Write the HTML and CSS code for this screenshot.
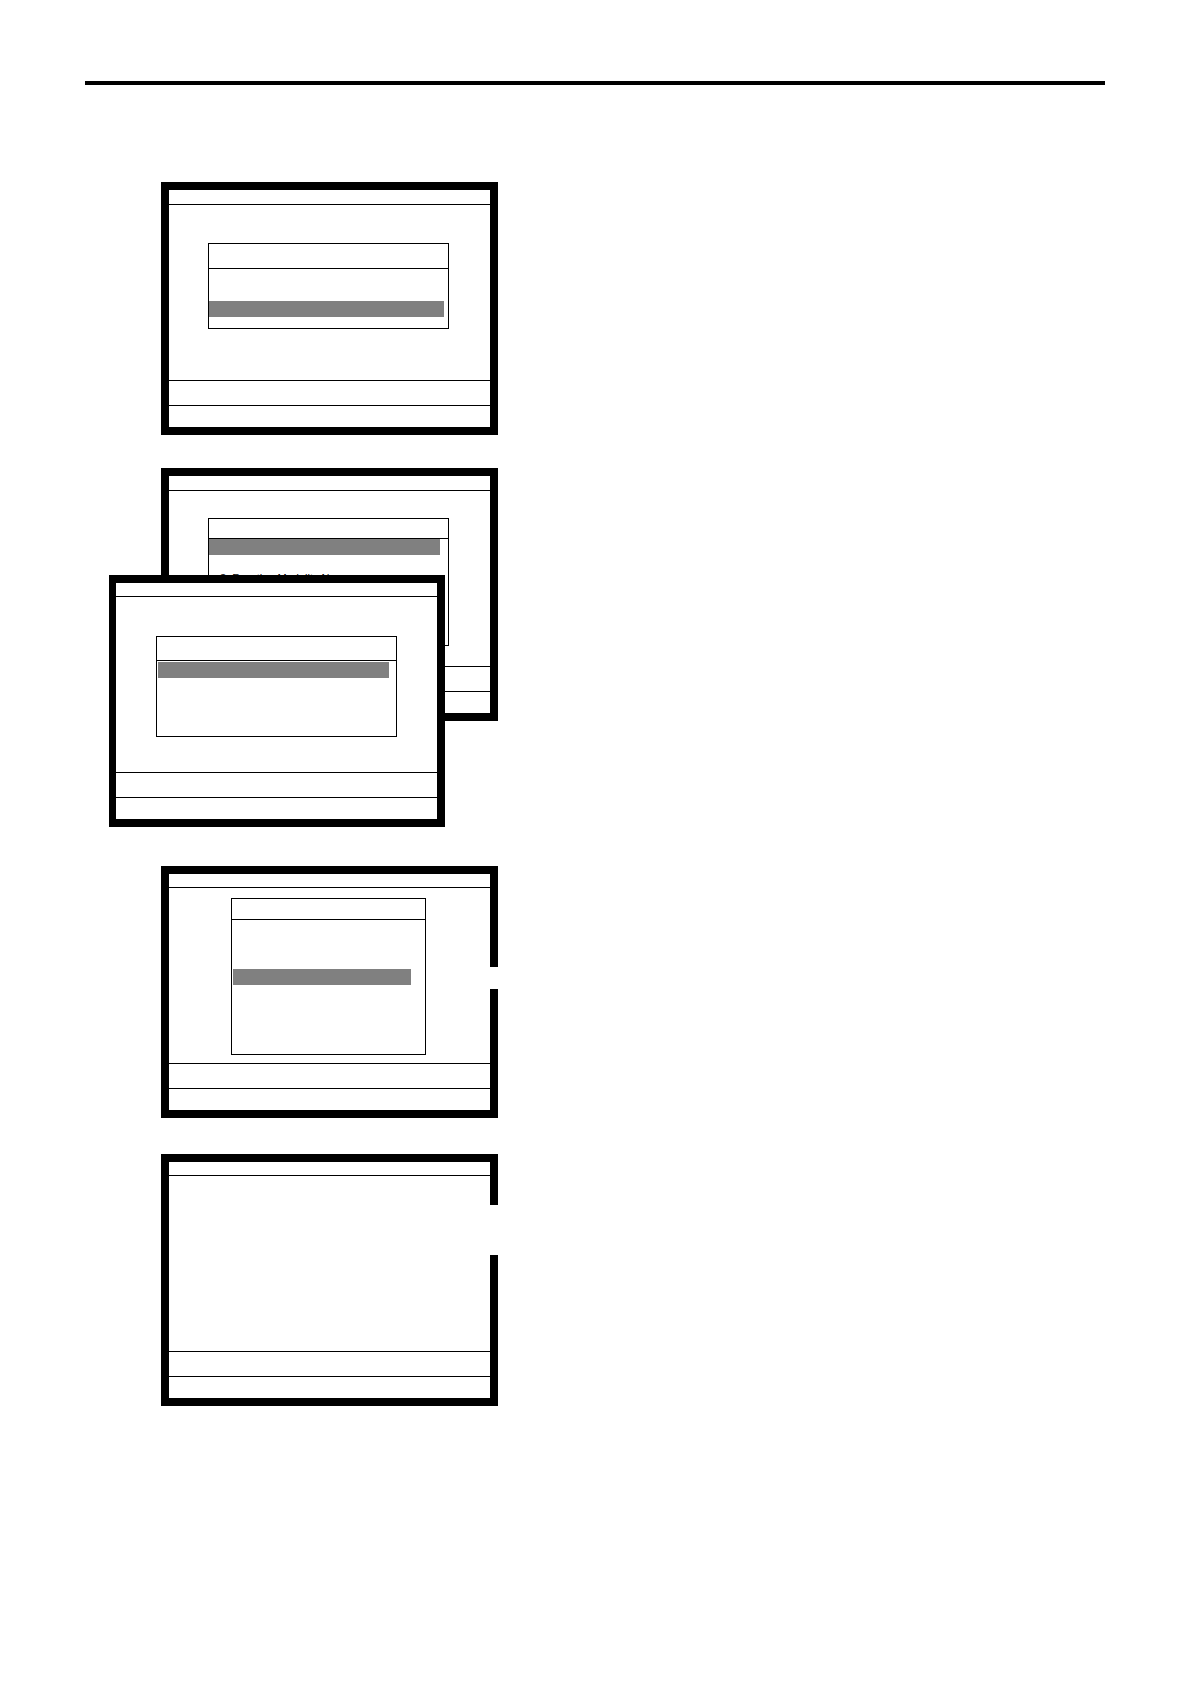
FILE: index.html
```html
<!DOCTYPE html>
<html lang="en">
<head>
    <meta charset="UTF-8">
    <meta name="viewport" content="width=device-width, initial-scale=1.0">
    <title>Function Menu</title>
    <link rel="stylesheet" href="styles.css">
</head>
<body>
    <header class="page-header"></header>

    <main class="steps">
        <section class="screen screen-tall">
            <div class="title-bar"></div>
            <div class="screen-body body-select">
                <div class="dialog">
                    <div class="dialog-head head-large"></div>
                    <ul class="menu menu-select">
                        <li></li>
                        <li></li>
                        <li class="selected"></li>
                    </ul>
                </div>
            </div>
            <div class="message-bar"></div>
            <div class="key-bar"></div>
        </section>

        <!-- Two screens, the second one over the first -->
        <div class="stack">
            <section class="screen screen-tall">
                <div class="title-bar"></div>
                <div class="screen-body body-function">
                    <div class="dialog">
                        <div class="dialog-head"></div>
                        <ul class="menu menu-function">
                            <li class="selected"></li>
                            <li></li>
                            <li>3. Function Modality No</li>
                            <li></li>
                            <li></li>
                            <li></li>
                        </ul>
                    </div>
                </div>
                <div class="message-bar"></div>
                <div class="key-bar"></div>
            </section>

            <section class="screen screen-front">
                <div class="title-bar"></div>
                <div class="screen-body body-front">
                    <div class="dialog">
                        <div class="dialog-head head-medium"></div>
                        <ul class="menu menu-inset">
                            <li class="selected"></li>
                            <li></li>
                            <li></li>
                            <li></li>
                        </ul>
                    </div>
                </div>
                <div class="message-bar"></div>
                <div class="key-bar"></div>
            </section>
        </div>

        <section class="screen">
            <div class="title-bar"></div>
            <div class="screen-body body-narrow">
                <div class="dialog">
                    <div class="dialog-head head-small"></div>
                    <ul class="menu menu-long">
                        <li></li>
                        <li></li>
                        <li></li>
                        <li class="selected"></li>
                        <li></li>
                        <li></li>
                        <li></li>
                        <li></li>
                    </ul>
                </div>
            </div>
            <div class="message-bar"></div>
            <div class="key-bar"></div>
            <div class="notch notch-small"></div>
        </section>

        <section class="screen">
            <div class="title-bar"></div>
            <div class="screen-body"></div>
            <div class="message-bar"></div>
            <div class="key-bar"></div>
            <div class="notch notch-large"></div>
        </section>
    </main>
</body>
</html>
```
FILE: styles.css
```css
* {
    margin: 0;
    padding: 0;
    box-sizing: border-box;
}

body {
    font-family: "Liberation Sans", Arial, sans-serif;
    font-size: 11px;
    line-height: 15px;
    color: #000;
    background: #fff;
    padding: 0 85px;
}

.page-header {
    padding-top: 81px;
    border-bottom: 4px solid #000;
}

.steps {
    display: flex;
    flex-direction: column;
    gap: 36px;
    max-width: 413px;
    padding: 97px 0 60px 76px;
}

/* Terminal screens */
.screen {
    position: relative;
    display: flex;
    flex-direction: column;
    background: #fff;
    border: 8px solid #000;
}

.title-bar {
    height: 14px;
    border-bottom: 1px solid #000;
}

.screen-tall .title-bar {
    height: 15px;
}

.screen-body {
    min-height: 175px;
}

.message-bar {
    height: 26px;
    border-top: 1px solid #000;
    border-bottom: 1px solid #000;
}

.key-bar {
    height: 21px;
}

.body-select {
    padding: 38px 41px 0 39px;
}

.body-function {
    padding: 27px 41px 0 39px;
}

.body-front {
    padding: 39px 40px 0;
}

.body-narrow {
    padding: 10px 64px 0 62px;
}

.stack {
    position: relative;
    margin: -3px 0 3px;
    padding-bottom: 106px;
}

.screen-front {
    position: absolute;
    top: 107px;
    left: -52px;
    width: 100%;
    max-width: 336px;
    border-left-width: 7px;
}

/* Dialogs */
.dialog {
    border: 1px solid #000;
}

.dialog-head {
    height: 20px;
    border-bottom: 1px solid #000;
}

.head-small {
    height: 21px;
}

.head-medium {
    height: 24px;
}

.head-large {
    height: 25px;
}

.menu {
    list-style: none;
}

.menu li {
    height: 16px;
    padding-left: 11px;
    white-space: nowrap;
}

.menu .selected {
    background: #808080;
}

.menu-select {
    padding: 0 4px 11px 0;
}

.menu-function {
    padding: 0 8px 10px 0;
}

.menu-inset {
    padding: 1px 7px 10px 1px;
}

.menu-long {
    padding: 1px 14px 5px 1px;
}

/* Breaks in the right edge of the frame */
.notch {
    position: absolute;
    right: -8px;
    width: 8px;
    background: #fff;
}

.notch-small {
    top: 93px;
    height: 22px;
}

.notch-large {
    top: 43px;
    height: 50px;
}
```
